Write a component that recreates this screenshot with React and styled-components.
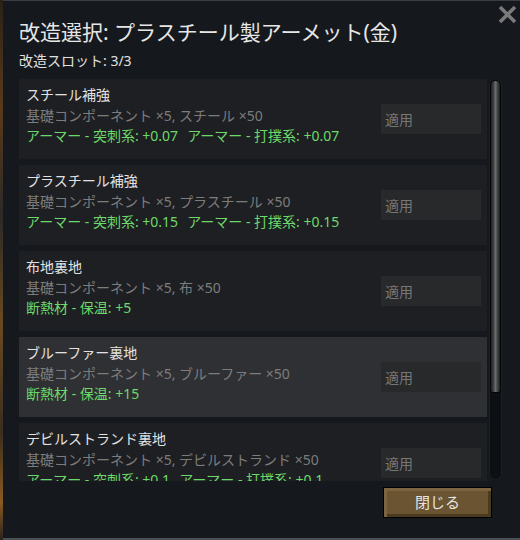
import React from "react";
import styled, { createGlobalStyle } from "styled-components";

const Global = createGlobalStyle`
  html, body { margin: 0; padding: 0; }
  body {
    width: 520px;
    height: 540px;
    overflow: hidden;
    background: linear-gradient(180deg, #2a2218 0%, #5a3a1c 20%, #2b2a26 40%, #6a4a22 60%, #3a2e20 80%, #8a5a20 93%, #2a2420 100%);
    font-family: "Noto Sans", "Noto Sans CJK JP", sans-serif;
  }
`;

const Stage = styled.div`
  display: flex;
  height: 540px;
  padding-left: 3px;
  box-sizing: border-box;
`;

const Window = styled.div`
  position: relative;
  flex: 1;
  height: 540px;
  box-sizing: border-box;
  background: #15181c;
  border-top: 1px solid #3b3f45;
  border-bottom: 2px solid #4a4e55;
  padding: 17px 0 0 16px;
  display: flex;
  flex-direction: column;
`;

const CloseX = styled.button`
  position: absolute;
  top: 3px;
  right: 3px;
  width: 20px;
  height: 20px;
  padding: 0;
  border: none;
  background: none;
  display: flex;
  align-items: center;
  justify-content: center;
`;

const Title = styled.h1`
  margin: 0;
  font-size: 21px;
  line-height: 28px;
  font-weight: 400;
  color: #e6e6e6;
`;

const Slots = styled.div`
  margin-top: 5px;
  font-size: 14px;
  line-height: 19px;
  color: #e0e0e0;
`;

const ListArea = styled.div`
  margin-top: 9px;
  width: 483px;
  height: 402px;
  display: flex;
  gap: 2px;
`;

const Items = styled.div`
  width: 468px;
  height: 402px;
  overflow: hidden;
  display: flex;
  flex-direction: column;
  gap: 6px;
`;

const Item = styled.div`
  flex: none;
  height: 80px;
  box-sizing: border-box;
  background: ${(p) => (p.$active ? "#2f3033" : "#1e1f22")};
  display: flex;
  align-items: center;
  padding: 0 6px 0 7px;
`;

const Info = styled.div`
  flex: 1;
  align-self: flex-start;
  padding-top: 6px;
`;

const ItemName = styled.div`
  font-size: 14px;
  line-height: 20px;
  color: #e2e2e2;
  margin-bottom: 1px;
`;

const Cost = styled.div`
  font-size: 14px;
  line-height: 20px;
  color: #7c7c7c;
`;

const Effects = styled.div`
  font-size: 14px;
  line-height: 20px;
  color: #6cd96a;
  display: flex;
  gap: 9px;
  white-space: nowrap;
`;

const ApplyBtn = styled.button`
  width: 100px;
  height: 30px;
  border: none;
  background: #27292a;
  color: #777;
  font-family: inherit;
  font-size: 14px;
  text-align: left;
  padding: 0 0 0 4px;
`;

const Track = styled.div`
  width: 13px;
  height: 401px;
  box-sizing: border-box;
  background: #0d1013;
  border: 1px solid #1c2024;
  border-radius: 7px;
  display: flex;
  flex-direction: column;
  overflow: hidden;
`;

const Thumb = styled.div`
  height: 313px;
  box-sizing: border-box;
  border: 1px solid #050607;
  border-radius: 6px 6px 3px 3px;
  background: linear-gradient(90deg, #1e1f20 0%, #3b3c3d 25%, #6a6b6c 50%, #3e3f40 75%, #1e1f20 100%);
`;

const Footer = styled.div`
  width: 483px;
  margin-top: 6px;
  display: flex;
  justify-content: flex-end;
  padding-right: 10px;
  box-sizing: border-box;
`;

const CloseButton = styled.button`
  width: 109px;
  height: 31px;
  box-sizing: border-box;
  border: 1px solid #000;
  background: #6a5431;
  box-shadow: inset 3px 3px 0 #7c6540, inset -3px -3px 0 #4a3a20;
  color: #e4e4e4;
  font-family: inherit;
  font-size: 15px;
  line-height: 1;
  padding: 0;
`;

const mods = [
  {
    name: "スチール補強",
    cost: "基礎コンポーネント ×5, スチール ×50",
    effects: ["アーマー - 突刺系: +0.07", "アーマー - 打撲系: +0.07"],
  },
  {
    name: "プラスチール補強",
    cost: "基礎コンポーネント ×5, プラスチール ×50",
    effects: ["アーマー - 突刺系: +0.15", "アーマー - 打撲系: +0.15"],
  },
  {
    name: "布地裏地",
    cost: "基礎コンポーネント ×5, 布 ×50",
    effects: ["断熱材 - 保温: +5"],
  },
  {
    name: "ブルーファー裏地",
    cost: "基礎コンポーネント ×5, ブルーファー ×50",
    effects: ["断熱材 - 保温: +15"],
    active: true,
  },
  {
    name: "デビルストランド裏地",
    cost: "基礎コンポーネント ×5, デビルストランド ×50",
    effects: ["アーマー - 突刺系: +0.1", "アーマー - 打撲系: +0.1"],
  },
];

export default function App() {
  return (
    <>
      <Global />
      <Stage>
        <Window>
          <CloseX aria-label="close">
            <svg width="19" height="19" viewBox="0 0 19 19">
              <path d="M2 2 L17 17 M17 2 L2 17" stroke="#7a7a7a" strokeWidth="3.6" strokeLinecap="butt" />
            </svg>
          </CloseX>
          <Title>改造選択: プラスチール製アーメット(金)</Title>
          <Slots>改造スロット: 3/3</Slots>
          <ListArea>
            <Items>
              {mods.map((m) => (
                <Item key={m.name} $active={m.active}>
                  <Info>
                    <ItemName>{m.name}</ItemName>
                    <Cost>{m.cost}</Cost>
                    <Effects>
                      {m.effects.map((e) => (
                        <span key={e}>{e}</span>
                      ))}
                    </Effects>
                  </Info>
                  <ApplyBtn>適用</ApplyBtn>
                </Item>
              ))}
            </Items>
            <Track>
              <Thumb />
            </Track>
          </ListArea>
          <Footer>
            <CloseButton>閉じる</CloseButton>
          </Footer>
        </Window>
      </Stage>
    </>
  );
}
